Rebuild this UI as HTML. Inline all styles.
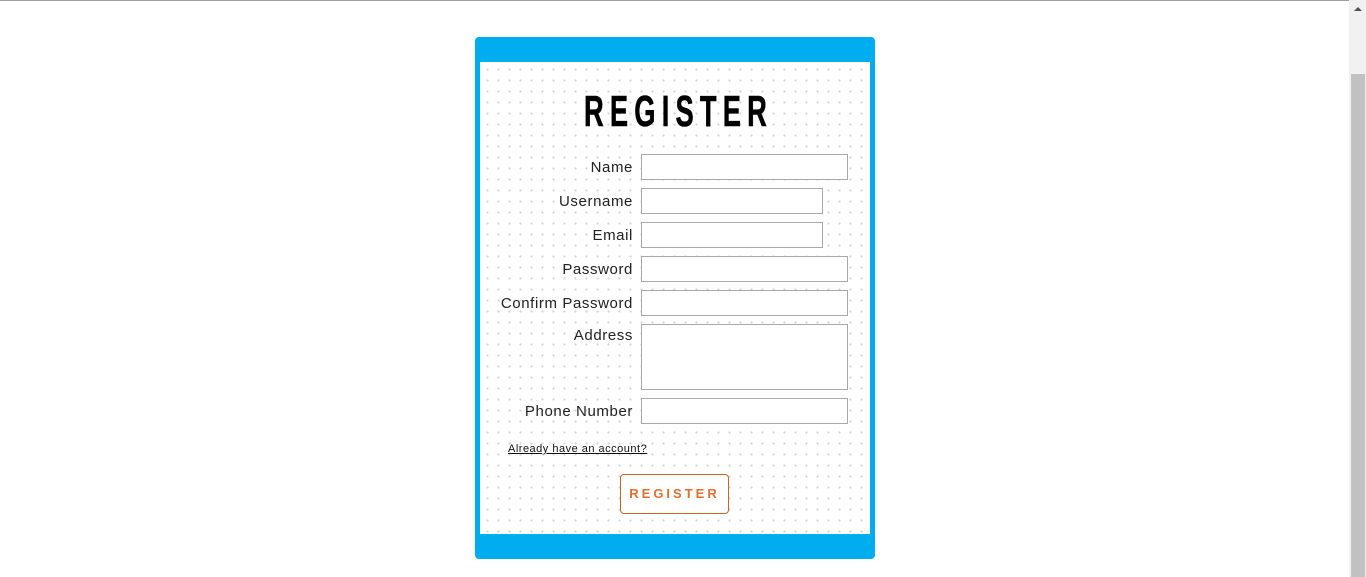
<!DOCTYPE html>
<html><head><style>
html,body{margin:0;padding:0;width:1366px;height:577px;overflow:hidden;background:#fff;font-family:"Liberation Sans",sans-serif;}
.top{position:absolute;left:0;top:0;width:1349px;height:1px;background:#a0a0a0;}
.sb{position:absolute;left:1349px;top:0;width:17px;height:577px;background:#f1f1f1;}
.thumb{position:absolute;left:1351px;top:74px;width:14px;height:503px;background:#c1c1c1;}
.arr{position:absolute;left:1354px;top:7px;width:0;height:0;border-left:4px solid transparent;border-right:4px solid transparent;border-bottom:4px solid #505050;}
.card{position:absolute;left:475px;top:37px;width:400px;height:522px;background:#00aeef;border-radius:4px;}
.inner{position:absolute;left:480px;top:62px;width:390px;height:472px;background-color:#fff;
background-image:radial-gradient(circle,#d4d4d4 0.9px,transparent 1.3px);background-size:11px 11px;background-position:2px 2px;}
.title{position:absolute;left:584px;top:88px;width:184px;font-weight:bold;font-size:44px;letter-spacing:10px;color:#000;transform:scaleX(0.62);transform-origin:left top;white-space:nowrap;line-height:48px;-webkit-text-stroke:0.6px #000;}
.lbl{position:absolute;right:733px;font-size:15px;letter-spacing:0.6px;color:#222;white-space:nowrap;}
.in{position:absolute;left:641px;width:205px;height:24px;border:1px solid #a9a9a9;background:#fff;}
.link{position:absolute;left:508px;top:443px;font-size:11px;letter-spacing:0.5px;color:#111;text-decoration:underline;}
.btn{position:absolute;left:620px;top:474px;width:107px;height:38px;border:1px solid #c8662a;border-radius:4px;background:#fff;color:#e07030;font-size:13px;font-weight:bold;letter-spacing:3px;text-align:center;line-height:38px;}
</style></head><body>
<div class="top"></div>
<div class="sb"></div><div class="thumb"></div><div class="arr"></div>
<div class="card"></div>
<div class="inner"></div>
<div class="title">REGISTER</div>
<div class="lbl" style="top:159px">Name</div><div class="in" style="top:154px"></div>
<div class="lbl" style="top:193px">Username</div><div class="in" style="top:188px;width:180px"></div>
<div class="lbl" style="top:227px">Email</div><div class="in" style="top:222px;width:180px"></div>
<div class="lbl" style="top:261px">Password</div><div class="in" style="top:256px"></div>
<div class="lbl" style="top:295px">Confirm Password</div><div class="in" style="top:290px"></div>
<div class="lbl" style="top:327px">Address</div><div class="in" style="top:324px;height:64px"></div>
<div class="lbl" style="top:403px">Phone Number</div><div class="in" style="top:398px"></div>
<div class="link">Already have an account?</div>
<div class="btn">REGISTER</div>
</body></html>
